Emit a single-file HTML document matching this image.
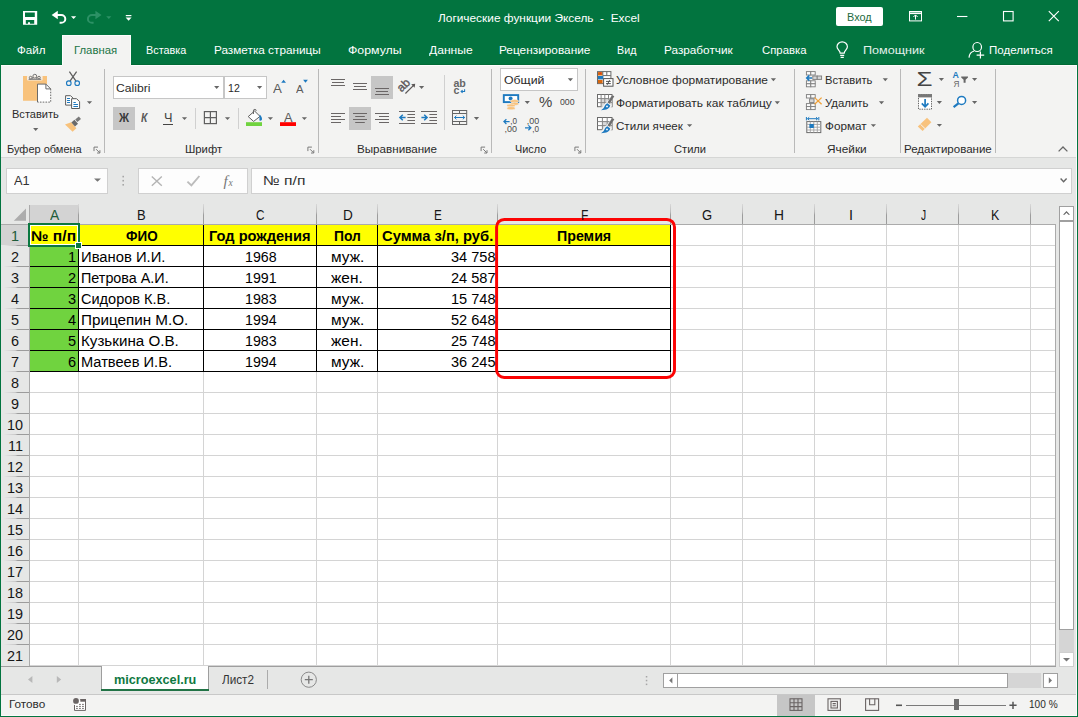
<!DOCTYPE html>
<html lang="ru"><head><meta charset="utf-8"><title>Логические функции Эксель - Excel</title>
<style>
html,body{margin:0;padding:0;}
body{width:1078px;height:717px;position:relative;overflow:hidden;background:#fff;font-family:"Liberation Sans", sans-serif;}
#app{position:absolute;left:0;top:0;width:1078px;height:717px;overflow:hidden;}
#app div{position:absolute;}
.t{position:absolute;white-space:pre;transform-origin:0 0;line-height:normal;font-family:"Liberation Sans", sans-serif;}
svg{position:absolute;left:0;top:0;}
</style></head><body>
<div id="app">
<div style="left:0px;top:0px;width:1078px;height:717px;background:#02743f;"></div>
<div style="left:1px;top:65px;width:1076px;height:93px;background:#f3f3f2;"></div>
<div style="left:1px;top:157px;width:1076px;height:1px;background:#d5d6d5;"></div>
<div style="left:1px;top:158px;width:1076px;height:47px;background:#e6e7e6;"></div>
<div style="left:1px;top:205px;width:1076px;height:461px;background:#e6e7e6;"></div>
<div style="left:1px;top:666px;width:1076px;height:28px;background:#e6e7e6;"></div>
<div style="left:1px;top:694px;width:1076px;height:1px;background:#c8c8c8;"></div>
<div style="left:1px;top:695px;width:1076px;height:21px;background:#f3f3f2;"></div>
<div style="left:1076px;top:65px;width:1px;height:651px;background:#fbfbfb;"></div>
<div style="left:1px;top:715px;width:1076px;height:1px;background:#fbfbfb;"></div>
<div style="left:836px;top:7px;width:47px;height:19px;background:#ffffff;border-radius:2px;"></div>
<div style="left:62px;top:35px;width:69px;height:30px;background:#f3f3f2;border:1px solid #fdfdfd;border-bottom:none;box-sizing:border-box;"></div>
<div style="left:1px;top:65px;width:61px;height:1px;background:#fdfdfd;"></div>
<div style="left:131px;top:65px;width:946px;height:1px;background:#fdfdfd;"></div>
<div style="left:1px;top:64px;width:61px;height:1px;background:#016a35;"></div>
<div style="left:131px;top:64px;width:946px;height:1px;background:#016a35;"></div>
<div style="left:104px;top:69px;width:1px;height:84px;background:#b9b9b9;"></div>
<div style="left:318px;top:69px;width:1px;height:84px;background:#b9b9b9;"></div>
<div style="left:491px;top:69px;width:1px;height:84px;background:#b9b9b9;"></div>
<div style="left:585px;top:69px;width:1px;height:84px;background:#b9b9b9;"></div>
<div style="left:794px;top:69px;width:1px;height:84px;background:#b9b9b9;"></div>
<div style="left:900px;top:69px;width:1px;height:84px;background:#b9b9b9;"></div>
<div style="left:995px;top:69px;width:1px;height:84px;background:#b9b9b9;"></div>
<div style="left:195px;top:108px;width:1px;height:21px;background:#d0d0d0;"></div>
<div style="left:238px;top:108px;width:1px;height:21px;background:#d0d0d0;"></div>
<div style="left:444px;top:75px;width:1px;height:55px;background:#d0d0d0;"></div>
<div style="left:113px;top:76px;width:111px;height:23px;background:#ffffff;border:1px solid #c6c6c6;box-sizing:border-box;"></div>
<div style="left:224px;top:76px;width:43px;height:23px;background:#ffffff;border:1px solid #c6c6c6;box-sizing:border-box;"></div>
<div style="left:113px;top:107px;width:22px;height:23px;background:#c6c6c6;"></div>
<div style="left:371px;top:76px;width:22px;height:23px;background:#c6c6c6;"></div>
<div style="left:349px;top:107px;width:22px;height:23px;background:#c6c6c6;"></div>
<div style="left:163px;top:124px;width:10px;height:1px;background:#444;"></div>
<div style="left:500px;top:68px;width:78px;height:23px;background:#ffffff;border:1px solid #c6c6c6;box-sizing:border-box;"></div>
<div style="left:6px;top:168px;width:102px;height:26px;background:#fdfdfd;border:1px solid #d0d0d0;box-sizing:border-box;"></div>
<div style="left:138px;top:168px;width:110px;height:26px;background:#fdfdfd;border:1px solid #d0d0d0;box-sizing:border-box;"></div>
<div style="left:251px;top:168px;width:821px;height:26px;background:#fdfdfd;border:1px solid #d0d0d0;box-sizing:border-box;"></div>
<div style="left:30px;top:225px;width:1026px;height:441px;background:#ffffff;"></div>
<div style="left:30px;top:205px;width:48px;height:19px;background:#d3d3d3;"></div>
<div style="left:1px;top:225px;width:28px;height:20px;background:#d3d3d3;"></div>
<div style="left:1px;top:224px;width:1055px;height:1px;background:#ababab;"></div>
<div style="left:29px;top:205px;width:1px;height:461px;background:#ababab;"></div>
<div style="left:1055px;top:224px;width:1px;height:442px;background:#ababab;"></div>
<div style="left:30px;top:665px;width:1025px;height:1px;background:#d4d4d4;"></div>
<div style="left:1px;top:666px;width:1055px;height:1px;background:#9e9e9e;"></div>
<div style="left:78px;top:204px;width:1px;height:20px;background:linear-gradient(180deg,#d8d8d8,#bcbcbc 40%,#9c9c9c 55%,#9c9c9c);"></div>
<div style="left:78px;top:225px;width:1px;height:440px;background:#d4d4d4;"></div>
<div style="left:203px;top:204px;width:1px;height:20px;background:linear-gradient(180deg,#d8d8d8,#bcbcbc 40%,#9c9c9c 55%,#9c9c9c);"></div>
<div style="left:203px;top:225px;width:1px;height:440px;background:#d4d4d4;"></div>
<div style="left:316px;top:204px;width:1px;height:20px;background:linear-gradient(180deg,#d8d8d8,#bcbcbc 40%,#9c9c9c 55%,#9c9c9c);"></div>
<div style="left:316px;top:225px;width:1px;height:440px;background:#d4d4d4;"></div>
<div style="left:377px;top:204px;width:1px;height:20px;background:linear-gradient(180deg,#d8d8d8,#bcbcbc 40%,#9c9c9c 55%,#9c9c9c);"></div>
<div style="left:377px;top:225px;width:1px;height:440px;background:#d4d4d4;"></div>
<div style="left:497px;top:204px;width:1px;height:20px;background:linear-gradient(180deg,#d8d8d8,#bcbcbc 40%,#9c9c9c 55%,#9c9c9c);"></div>
<div style="left:497px;top:225px;width:1px;height:440px;background:#d4d4d4;"></div>
<div style="left:670px;top:204px;width:1px;height:20px;background:linear-gradient(180deg,#d8d8d8,#bcbcbc 40%,#9c9c9c 55%,#9c9c9c);"></div>
<div style="left:670px;top:225px;width:1px;height:440px;background:#d4d4d4;"></div>
<div style="left:742px;top:204px;width:1px;height:20px;background:linear-gradient(180deg,#d8d8d8,#bcbcbc 40%,#9c9c9c 55%,#9c9c9c);"></div>
<div style="left:742px;top:225px;width:1px;height:440px;background:#d4d4d4;"></div>
<div style="left:814px;top:204px;width:1px;height:20px;background:linear-gradient(180deg,#d8d8d8,#bcbcbc 40%,#9c9c9c 55%,#9c9c9c);"></div>
<div style="left:814px;top:225px;width:1px;height:440px;background:#d4d4d4;"></div>
<div style="left:886px;top:204px;width:1px;height:20px;background:linear-gradient(180deg,#d8d8d8,#bcbcbc 40%,#9c9c9c 55%,#9c9c9c);"></div>
<div style="left:886px;top:225px;width:1px;height:440px;background:#d4d4d4;"></div>
<div style="left:958px;top:204px;width:1px;height:20px;background:linear-gradient(180deg,#d8d8d8,#bcbcbc 40%,#9c9c9c 55%,#9c9c9c);"></div>
<div style="left:958px;top:225px;width:1px;height:440px;background:#d4d4d4;"></div>
<div style="left:1030px;top:204px;width:1px;height:20px;background:linear-gradient(180deg,#d8d8d8,#bcbcbc 40%,#9c9c9c 55%,#9c9c9c);"></div>
<div style="left:1030px;top:225px;width:1px;height:440px;background:#d4d4d4;"></div>
<div style="left:30px;top:245px;width:1025px;height:1px;background:#d4d4d4;"></div>
<div style="left:4px;top:245px;width:25px;height:1px;background:linear-gradient(90deg,#e6e6e6,#c8c8c8 45%,#9c9c9c 55%,#9c9c9c);"></div>
<div style="left:30px;top:266px;width:1025px;height:1px;background:#d4d4d4;"></div>
<div style="left:4px;top:266px;width:25px;height:1px;background:linear-gradient(90deg,#e6e6e6,#c8c8c8 45%,#9c9c9c 55%,#9c9c9c);"></div>
<div style="left:30px;top:287px;width:1025px;height:1px;background:#d4d4d4;"></div>
<div style="left:4px;top:287px;width:25px;height:1px;background:linear-gradient(90deg,#e6e6e6,#c8c8c8 45%,#9c9c9c 55%,#9c9c9c);"></div>
<div style="left:30px;top:308px;width:1025px;height:1px;background:#d4d4d4;"></div>
<div style="left:4px;top:308px;width:25px;height:1px;background:linear-gradient(90deg,#e6e6e6,#c8c8c8 45%,#9c9c9c 55%,#9c9c9c);"></div>
<div style="left:30px;top:329px;width:1025px;height:1px;background:#d4d4d4;"></div>
<div style="left:4px;top:329px;width:25px;height:1px;background:linear-gradient(90deg,#e6e6e6,#c8c8c8 45%,#9c9c9c 55%,#9c9c9c);"></div>
<div style="left:30px;top:350px;width:1025px;height:1px;background:#d4d4d4;"></div>
<div style="left:4px;top:350px;width:25px;height:1px;background:linear-gradient(90deg,#e6e6e6,#c8c8c8 45%,#9c9c9c 55%,#9c9c9c);"></div>
<div style="left:30px;top:371px;width:1025px;height:1px;background:#d4d4d4;"></div>
<div style="left:4px;top:371px;width:25px;height:1px;background:linear-gradient(90deg,#e6e6e6,#c8c8c8 45%,#9c9c9c 55%,#9c9c9c);"></div>
<div style="left:30px;top:392px;width:1025px;height:1px;background:#d4d4d4;"></div>
<div style="left:4px;top:392px;width:25px;height:1px;background:linear-gradient(90deg,#e6e6e6,#c8c8c8 45%,#9c9c9c 55%,#9c9c9c);"></div>
<div style="left:30px;top:413px;width:1025px;height:1px;background:#d4d4d4;"></div>
<div style="left:4px;top:413px;width:25px;height:1px;background:linear-gradient(90deg,#e6e6e6,#c8c8c8 45%,#9c9c9c 55%,#9c9c9c);"></div>
<div style="left:30px;top:434px;width:1025px;height:1px;background:#d4d4d4;"></div>
<div style="left:4px;top:434px;width:25px;height:1px;background:linear-gradient(90deg,#e6e6e6,#c8c8c8 45%,#9c9c9c 55%,#9c9c9c);"></div>
<div style="left:30px;top:455px;width:1025px;height:1px;background:#d4d4d4;"></div>
<div style="left:4px;top:455px;width:25px;height:1px;background:linear-gradient(90deg,#e6e6e6,#c8c8c8 45%,#9c9c9c 55%,#9c9c9c);"></div>
<div style="left:30px;top:476px;width:1025px;height:1px;background:#d4d4d4;"></div>
<div style="left:4px;top:476px;width:25px;height:1px;background:linear-gradient(90deg,#e6e6e6,#c8c8c8 45%,#9c9c9c 55%,#9c9c9c);"></div>
<div style="left:30px;top:497px;width:1025px;height:1px;background:#d4d4d4;"></div>
<div style="left:4px;top:497px;width:25px;height:1px;background:linear-gradient(90deg,#e6e6e6,#c8c8c8 45%,#9c9c9c 55%,#9c9c9c);"></div>
<div style="left:30px;top:518px;width:1025px;height:1px;background:#d4d4d4;"></div>
<div style="left:4px;top:518px;width:25px;height:1px;background:linear-gradient(90deg,#e6e6e6,#c8c8c8 45%,#9c9c9c 55%,#9c9c9c);"></div>
<div style="left:30px;top:539px;width:1025px;height:1px;background:#d4d4d4;"></div>
<div style="left:4px;top:539px;width:25px;height:1px;background:linear-gradient(90deg,#e6e6e6,#c8c8c8 45%,#9c9c9c 55%,#9c9c9c);"></div>
<div style="left:30px;top:560px;width:1025px;height:1px;background:#d4d4d4;"></div>
<div style="left:4px;top:560px;width:25px;height:1px;background:linear-gradient(90deg,#e6e6e6,#c8c8c8 45%,#9c9c9c 55%,#9c9c9c);"></div>
<div style="left:30px;top:581px;width:1025px;height:1px;background:#d4d4d4;"></div>
<div style="left:4px;top:581px;width:25px;height:1px;background:linear-gradient(90deg,#e6e6e6,#c8c8c8 45%,#9c9c9c 55%,#9c9c9c);"></div>
<div style="left:30px;top:602px;width:1025px;height:1px;background:#d4d4d4;"></div>
<div style="left:4px;top:602px;width:25px;height:1px;background:linear-gradient(90deg,#e6e6e6,#c8c8c8 45%,#9c9c9c 55%,#9c9c9c);"></div>
<div style="left:30px;top:623px;width:1025px;height:1px;background:#d4d4d4;"></div>
<div style="left:4px;top:623px;width:25px;height:1px;background:linear-gradient(90deg,#e6e6e6,#c8c8c8 45%,#9c9c9c 55%,#9c9c9c);"></div>
<div style="left:30px;top:644px;width:1025px;height:1px;background:#d4d4d4;"></div>
<div style="left:4px;top:644px;width:25px;height:1px;background:linear-gradient(90deg,#e6e6e6,#c8c8c8 45%,#9c9c9c 55%,#9c9c9c);"></div>
<div style="left:30px;top:225px;width:640px;height:20px;background:#ffff00;"></div>
<div style="left:30px;top:246px;width:48px;height:125px;background:#70d33f;"></div>
<div style="left:30px;top:245px;width:641px;height:1px;background:#000000;"></div>
<div style="left:30px;top:266px;width:641px;height:1px;background:#000000;"></div>
<div style="left:30px;top:287px;width:641px;height:1px;background:#000000;"></div>
<div style="left:30px;top:308px;width:641px;height:1px;background:#000000;"></div>
<div style="left:30px;top:329px;width:641px;height:1px;background:#000000;"></div>
<div style="left:30px;top:350px;width:641px;height:1px;background:#000000;"></div>
<div style="left:30px;top:371px;width:641px;height:1px;background:#000000;"></div>
<div style="left:78px;top:225px;width:1px;height:147px;background:#000000;"></div>
<div style="left:203px;top:225px;width:1px;height:147px;background:#000000;"></div>
<div style="left:316px;top:225px;width:1px;height:147px;background:#000000;"></div>
<div style="left:377px;top:225px;width:1px;height:147px;background:#000000;"></div>
<div style="left:497px;top:225px;width:1px;height:147px;background:#000000;"></div>
<div style="left:670px;top:225px;width:1px;height:147px;background:#000000;"></div>
<div style="left:30px;top:225px;width:48px;height:20px;border:1px solid #ffffff;box-sizing:border-box;"></div>
<div style="left:28px;top:223px;width:52px;height:24px;border:2px solid #0b7840;box-sizing:border-box;"></div>
<div style="left:75px;top:242px;width:7px;height:7px;background:#0b7840;border:1px solid #ffffff;box-sizing:border-box;"></div>
<div style="left:101px;top:666px;width:108px;height:23px;background:#ffffff;border-left:1px solid #9e9e9e;border-right:1px solid #9e9e9e;box-sizing:border-box;"></div>
<div style="left:101px;top:689px;width:108px;height:2px;background:#217346;"></div>
<div style="left:267px;top:670px;width:1px;height:19px;background:#ababab;"></div>
<div style="left:1059px;top:206px;width:15px;height:15px;background:#ffffff;border:1px solid #a0a0a0;box-sizing:border-box;"></div>
<div style="left:1059px;top:221px;width:15px;height:409px;background:#ffffff;border:1px solid #a0a0a0;box-sizing:border-box;"></div>
<div style="left:1059px;top:630px;width:15px;height:22px;background:#d5d5d5;"></div>
<div style="left:1059px;top:652px;width:15px;height:15px;background:#ffffff;border:1px solid #cfcfcf;box-sizing:border-box;"></div>
<div style="left:663px;top:673px;width:15px;height:15px;background:#ffffff;border:1px solid #a0a0a0;box-sizing:border-box;"></div>
<div style="left:677px;top:673px;width:331px;height:15px;background:#ffffff;border:1px solid #a0a0a0;box-sizing:border-box;"></div>
<div style="left:1008px;top:673px;width:33px;height:15px;background:#d5d5d5;"></div>
<div style="left:1043px;top:673px;width:15px;height:15px;background:#ffffff;border:1px solid #a0a0a0;box-sizing:border-box;"></div>
<div style="left:777px;top:695px;width:38px;height:21px;background:#c6c6c6;"></div>
<div style="left:906px;top:705px;width:100px;height:1px;background:#7a7a7a;"></div>
<div style="left:954px;top:699px;width:5px;height:11px;background:#6e6e6e;"></div>
<svg width="1078" height="717" viewBox="0 0 1078 717">
<rect x="496.6" y="219.4" width="177.9" height="158.1" rx="7.6" ry="7.6" fill="none" stroke="#fc0404" stroke-width="2.95"/>
<path fill-rule="evenodd" fill="#ffffff" d="M23 11h14.2v13.8H23zM25 12.6v4.4h9.8v-4.4zM25.8 20v3.8h2.2v-1.6h2v1.6h4.2V20z"/>
<path d="M51.6 15.1l6.2-4.3v3.2H61.2a5.1 4.9 0 0 1 0 9.8h-1.6v-2h1.6a3.1 2.9 0 0 0 0-5.8H57.8v3.3z" fill="#ffffff"/>
<path d="M71 16.2h5.2l-2.6 2.8z" fill="#ffffff"/>
<path d="M101.6 15.1l-6.2-4.3v3.2H92a5.1 4.9 0 0 0 0 9.8h1.6v-2H92a3.1 2.9 0 0 1 0-5.8h3.4v3.3z" fill="#2c9165"/>
<path d="M106.2 16.2h5.2l-2.6 2.8z" fill="#2c9165"/>
<rect x="125.8" y="15" width="5.6" height="1.2" fill="#ffffff"/><path d="M125.6 17.6h6l-3 3.2z" fill="#ffffff"/>
<g fill="none" stroke="#ffffff" stroke-width="1"><rect x="909.5" y="11.5" width="12" height="9.4"/><path d="M909.5 13.3h12" stroke-width="1.6"/><path d="M915.5 19.6v-4.6M913.4 17l2.1-2.1 2.1 2.1"/></g>
<path d="M957 16.5h10.4" stroke="#ffffff" stroke-width="1.1"/>
<rect x="1003.5" y="11.5" width="9.6" height="9.4" fill="none" stroke="#ffffff" stroke-width="1.1"/>
<path d="M1048.8 11.2l10 10M1058.8 11.2l-10 10" stroke="#ffffff" stroke-width="1.15"/>
<g fill="none" stroke="#ffffff" stroke-width="1.2"><path d="M840.2 53.2c0-2.6-3.2-3.6-3.2-6.4a5.2 5 0 0 1 10.4 0c0 2.8-3.2 3.8-3.2 6.4z"/><path d="M840.2 55.3h4M840.6 57.3h3.2"/></g>
<g fill="none" stroke="#ffffff" stroke-width="1.2"><ellipse cx="977.2" cy="47" rx="4.3" ry="4.5"/><path d="M969 57.6c.4-4 2.6-6 5.2-6.6M976.6 55.2h7.6M980.4 51.6v7"/></g>
<path d="M23 76h24v8H37v16.8H23z" fill="#f8c27c"/>
<rect x="27" y="75.6" width="15.6" height="4.8" rx="1" fill="#f6efe6"/>
<g fill="none" stroke="#747474" stroke-width="1"><path d="M28.6 79.3h12.6"/><circle cx="30.6" cy="77.6" r="1.3"/><circle cx="34.8" cy="76.2" r="1.9"/><circle cx="39" cy="77.6" r="1.3"/><path d="M32.8 79v-2M36.8 79v-2"/></g>
<path d="M37.5 84.1h8.4l4.8 4.8v13.2H37.5z" fill="#ffffff"/>
<path d="M37.5 102.1V84.1h8.4l4.8 4.8M45.9 84.1v4.8h4.8" fill="none" stroke="#6a6a6a" stroke-width="1"/>
<path d="M50.7 88.9v13.2H37.5" fill="none" stroke="#6a6a6a" stroke-width="1" stroke-dasharray="1.6 1.2"/>
<path d="M33.1 128h5.2l-2.6 2.9z" fill="#666666"/>
<g fill="none" stroke="#5d5d5d" stroke-width="1.25"><path d="M69.4 71.6l6.6 9.6M76.6 71.6l-6.6 9.6"/></g>
<g fill="none" stroke="#1e7ac0" stroke-width="1.1"><circle cx="68.8" cy="83.2" r="2.3"/><circle cx="77.2" cy="83.2" r="2.3"/></g>
<g fill="#ffffff" stroke="#5d5d5d" stroke-width="1"><path d="M65.6 95.7h5l2.6 2.6v6.8h-7.6z"/><path d="M71.6 98.7h5l3 3v6.8h-8z"/></g>
<g stroke="#1e7ac0" stroke-width="1"><path d="M67 98.5h3M67 100.5h3M67 102.5h3M73.4 102.5h2.4M73.4 104.5h4.6M73.4 106.5h4.6"/></g>
<path d="M86.9 101.2h5.2l-2.6 2.9z" fill="#666666"/>
<path d="M65 124.4l6.2-2.2 5.2 6-3.8 3.6z" fill="#f8c27c"/>
<path d="M71.4 122.4l3-2.6 3.6 4-3 2.8z" fill="#6a6a6a"/><path d="M75.2 119.4l3.6-3 2.2 2.6-3.6 3z" fill="#7a7a7a"/>
<g fill="none" stroke="#7a7a7a" stroke-width="1"><path d="M94.0 151.1v-4h4"/><path d="M96.1 149.2l3.6 3.6M99.9 150.2v2.8h-2.8"/></g>
<g fill="none" stroke="#7a7a7a" stroke-width="1"><path d="M307.9 151.1v-4h4"/><path d="M310.0 149.2l3.6 3.6M313.79999999999995 150.2v2.8h-2.8"/></g>
<g fill="none" stroke="#7a7a7a" stroke-width="1"><path d="M481.1 151.1v-4h4"/><path d="M483.20000000000005 149.2l3.6 3.6M487.0 150.2v2.8h-2.8"/></g>
<g fill="none" stroke="#7a7a7a" stroke-width="1"><path d="M574.9 151.1v-4h4"/><path d="M577.0 149.2l3.6 3.6M580.8 150.2v2.8h-2.8"/></g>
<path d="M214.1 86h5.2l-2.6 2.9z" fill="#666666"/>
<path d="M257 86h5.2l-2.6 2.9z" fill="#666666"/>
<path d="M281.2 82.8h4.8l-2.4-3z" fill="#1e7ac0"/><path d="M303.1 79.8h4.8l-2.4 3z" fill="#1e7ac0"/>
<path d="M181.9 117.2h5.2l-2.6 2.9z" fill="#666666"/>
<g fill="none" stroke="#5f5f5f" stroke-width="1.2"><rect x="204.4" y="111.6" width="12" height="12"/><path d="M210.4 111.6v12M204.4 117.6h12"/></g>
<path d="M224.9 117.2h5.2l-2.6 2.9z" fill="#666666"/>
<rect x="246" y="122.2" width="16" height="3.8" fill="#70d33f"/>
<path d="M248.2 116.6l6.4-5.6 5.4 5.4-6.4 5z" fill="#ffffff" stroke="#5f5f5f" stroke-width="1"/>
<path d="M253.4 114v-3.2a1.4 1.4 0 0 1 2.8 0" fill="none" stroke="#5f5f5f" stroke-width="1"/>
<path d="M259.6 114.6c1.6 1.4 2.4 3 2.4 4.4a1.5 1.6 0 0 1 -2.6 1.2z" fill="#1e7ac0"/>
<path d="M267.8 117.2h5.2l-2.6 2.9z" fill="#666666"/>
<rect x="280" y="122.2" width="16" height="3.8" fill="#ff0000"/>
<path d="M301.8 117.2h5.2l-2.6 2.9z" fill="#666666"/>
<path d="M331 79.5H345M332 82.5H344M331 85.5H345" stroke="#6a6666" stroke-width="1.05" fill="none"/>
<path d="M353 83.5H367M354 86.5H366M353 89.5H367" stroke="#6a6666" stroke-width="1.05" fill="none"/>
<path d="M375 88.5H389M376 91.5H388M375 94.5H389" stroke="#6a6666" stroke-width="1.05" fill="none"/>
<text x="0" y="0" transform="translate(401.6 92.6) rotate(-45)" font-family="Liberation Sans, sans-serif" font-size="11.8" fill="#5a5656" stroke="#5a5656" stroke-width=".35">ab</text>
<path d="M405.4 93.5l8.4-8.4" fill="none" stroke="#5a5656" stroke-width="1.15"/><path d="M415.2 83.7l-.6 4-3.4-3.4z" fill="#5a5656"/>
<path d="M419 86h5.2l-2.6 2.9z" fill="#666666"/>
<path d="M331 113.5H345M331 116.5H341M331 119.5H345M331 122.5H341" stroke="#6a6666" stroke-width="1.05" fill="none"/>
<path d="M353 113.5H367M355.2 116.5H364.8M353 119.5H367M355.2 122.5H364.8" stroke="#6a6666" stroke-width="1.05" fill="none"/>
<path d="M375 113.5H389M379 116.5H389M375 119.5H389M379 122.5H389" stroke="#6a6666" stroke-width="1.05" fill="none"/>
<path d="M399 111.5H415M407.4 114.5H415M407.4 117.5H415M407.4 120.5H415M399 123.5H415" stroke="#6a6666" stroke-width="1.05" fill="none"/>
<path d="M421 111.5H437M429.4 114.5H437M429.4 117.5H437M429.4 120.5H437M421 123.5H437" stroke="#6a6666" stroke-width="1.05" fill="none"/>
<path d="M405.6 117.5h-5.4M402.8 114.7l-2.9 2.8 2.9 2.8" fill="none" stroke="#1e7ac0" stroke-width="1.5"/>
<path d="M421.4 117.5h5.4M424.2 114.7l2.9 2.8-2.9 2.8" fill="none" stroke="#1e7ac0" stroke-width="1.5"/>
<text x="453.4" y="86.6" font-family="Liberation Sans, sans-serif" font-size="10" font-weight="700" fill="#666" textLength="12.4" lengthAdjust="spacingAndGlyphs">ab</text>
<text x="453.6" y="93.6" font-family="Liberation Sans, sans-serif" font-size="10.6" font-weight="700" fill="#666">c</text>
<path d="M464.6 89.2v2.3h-3.4M462.6 90.1l-1.5 1.4 1.5 1.4" fill="none" stroke="#1e7ac0" stroke-width="1.05"/>
<g fill="none" stroke="#666" stroke-width="1"><rect x="452.5" y="110.5" width="14.2" height="14"/><path d="M452.5 113.5h14.2M452.5 121.5h14.2M459.5 110.5v3M459.5 121.5v3"/></g>
<path d="M454.6 117.5h10M456.4 115.7l-1.9 1.8 1.9 1.8M462.8 115.7l1.9 1.8-1.9 1.8" fill="none" stroke="#1e7ac0" stroke-width="1"/>
<path d="M473.9 117h5.2l-2.6 2.9z" fill="#666666"/>
<path d="M567.8 78.3h5.2l-2.6 2.9z" fill="#666666"/>
<rect x="503.8" y="95.1" width="14.4" height="7" fill="#ffffff" stroke="#1e7ac0" stroke-width="1.9"/><circle cx="510.6" cy="98.6" r="2" fill="#1e7ac0"/>
<g fill="#f8c27c" stroke="#f3f3f2" stroke-width=".5"><ellipse cx="514.6" cy="101.2" rx="4.2" ry="1.6"/><ellipse cx="514.6" cy="103.8" rx="4.2" ry="1.6"/><ellipse cx="511" cy="105.6" rx="4.2" ry="1.6"/><ellipse cx="511" cy="108.2" rx="4.2" ry="1.6"/></g>
<path d="M524.7 101h5.2l-2.6 2.9z" fill="#666666"/>
<text x="510.2" y="123.8" font-family="Liberation Sans, sans-serif" font-size="8.2" fill="#4a4a4a" textLength="6.8" lengthAdjust="spacingAndGlyphs">,0</text>
<text x="504.6" y="131.5" font-family="Liberation Sans, sans-serif" font-size="8.2" fill="#4a4a4a" textLength="12.4" lengthAdjust="spacingAndGlyphs">,00</text>
<text x="526.8" y="123.8" font-family="Liberation Sans, sans-serif" font-size="8.2" fill="#4a4a4a" textLength="12.4" lengthAdjust="spacingAndGlyphs">,00</text>
<text x="532.2" y="131.5" font-family="Liberation Sans, sans-serif" font-size="8.2" fill="#4a4a4a" textLength="6.8" lengthAdjust="spacingAndGlyphs">,0</text>
<path d="M509.6 121.6h-5.6M506.4 119.2l-2.5 2.4 2.5 2.4" fill="none" stroke="#1e7ac0" stroke-width="1.2"/>
<path d="M525 127.8h5.8M528.4 125.4l2.5 2.4-2.5 2.4" fill="none" stroke="#1e7ac0" stroke-width="1.2"/>
<rect x="597.5" y="71.6" width="13.4" height="12" fill="#ffffff" stroke="#6a6a6a" stroke-width="1"/>
<rect x="598" y="72.1" width="4.6" height="3.4" fill="#d8670e"/><rect x="598" y="76" width="5.4" height="3.4" fill="#1e7ac0"/><rect x="598" y="79.9" width="4.6" height="3.4" fill="#d8670e"/>
<rect x="599.6" y="72.6" width="1.6" height="1.2" fill="#e8261a"/>
<path d="M602.8 71.6v4M606.8 71.6v4M602.8 75.6h8" stroke="#6a6a6a" stroke-width="1" fill="none"/>
<rect x="603.6" y="78.6" width="9.4" height="7.6" fill="#ffffff" stroke="#555" stroke-width="1"/>
<path d="M606 81.4h4.8M606 83.6h4.8M609.6 80.2l-2.4 4.6" stroke="#444" stroke-width=".9" fill="none"/>
<rect x="597.5" y="94.5" width="14.6" height="12.2" fill="#ffffff" stroke="#6a6a6a" stroke-width="1"/>
<rect x="601.1" y="98.6" width="10.9" height="8.1" fill="#d9d9d9"/>
<path d="M601.1 94.5v12.2M604.8 94.5v12.2M608.5 94.5v12.2M597.5 98.6h14.6M597.5 102.6h14.6" stroke="#858585" stroke-width="1" fill="none"/>
<path d="M613.6 95.2l-5 8.4l2 2.2c-1 3.4-4.6 4.6-10.6 4.8c3-1.8 3.6-3.4 4.4-5c.6-1.4 1.4-2.2 2.8-2.6z" fill="#f3f3f2" stroke="#f3f3f2" stroke-width="2"/>
<path d="M613.2 95.6l-4.6 7.6" stroke="#6e6e6e" stroke-width="2.6"/>
<path d="M607.4 103.2l2.8 2.4c-.6 3-3.6 4.6-9.2 4.6c2.6-1.6 3.2-3 3.8-4.4c.6-1.4 1.4-2.2 2.6-2.6z" fill="#1e7ac0"/>
<circle cx="607" cy="106.4" r=".9" fill="#ffffff"/>
<rect x="597.5" y="117.5" width="14.6" height="12.2" fill="#ffffff" stroke="#6a6a6a" stroke-width="1"/>
<rect x="602.4" y="121.6" width="9.7" height="8.1" fill="#d9d9d9"/>
<path d="M602.4 117.5v12.2M607.2 117.5v12.2M597.5 121.6h14.6M597.5 125.6h14.6" stroke="#858585" stroke-width="1" fill="none"/>
<path d="M613.6 118.2l-5 8.4l2 2.2c-1 3.4-4.6 4.6-10.6 4.8c3-1.8 3.6-3.4 4.4-5c.6-1.4 1.4-2.2 2.8-2.6z" fill="#f3f3f2" stroke="#f3f3f2" stroke-width="2"/>
<path d="M613.2 118.6l-4.6 7.6" stroke="#6e6e6e" stroke-width="2.6"/>
<path d="M607.4 126.2l2.8 2.4c-.6 3-3.6 4.6-9.2 4.6c2.6-1.6 3.2-3 3.8-4.4c.6-1.4 1.4-2.2 2.6-2.6z" fill="#1e7ac0"/>
<circle cx="607" cy="129.4" r=".9" fill="#ffffff"/>
<path d="M770.8 78.3h5.2l-2.6 2.9z" fill="#666666"/>
<path d="M774.7 101.3h5.2l-2.6 2.9z" fill="#666666"/>
<path d="M687 124.2h5.2l-2.6 2.9z" fill="#666666"/>
<rect x="806.4" y="71.6" width="4.4" height="3.4" fill="#fbfbfb" stroke="#7c7c7c" stroke-width=".9"/>
<rect x="810.8" y="71.6" width="4.4" height="3.4" fill="#fbfbfb" stroke="#7c7c7c" stroke-width=".9"/>
<rect x="812.8" y="76" width="4.4" height="3.4" fill="#d6d6d6" stroke="#7c7c7c" stroke-width=".9"/>
<rect x="817.2" y="76" width="4.4" height="3.4" fill="#d6d6d6" stroke="#7c7c7c" stroke-width=".9"/>
<rect x="806.4" y="80.8" width="4.4" height="3" fill="#fbfbfb" stroke="#7c7c7c" stroke-width=".9"/>
<rect x="810.8" y="80.8" width="4.4" height="3" fill="#fbfbfb" stroke="#7c7c7c" stroke-width=".9"/>
<rect x="806.4" y="83.8" width="4.4" height="3" fill="#fbfbfb" stroke="#7c7c7c" stroke-width=".9"/>
<rect x="810.8" y="83.8" width="4.4" height="3" fill="#fbfbfb" stroke="#7c7c7c" stroke-width=".9"/>
<path d="M812 78h-5M809.4 75.4l-2.7 2.6 2.7 2.6" fill="none" stroke="#1e7ac0" stroke-width="1.5"/>
<rect x="806.4" y="94.6" width="4.4" height="3.4" fill="#fbfbfb" stroke="#7c7c7c" stroke-width=".9"/>
<rect x="810.8" y="94.6" width="4.4" height="3.4" fill="#fbfbfb" stroke="#7c7c7c" stroke-width=".9"/>
<rect x="809.6" y="98.8" width="4.4" height="3.8" fill="#d6d6d6" stroke="#7c7c7c" stroke-width=".9"/>
<rect x="806.4" y="103.6" width="4.4" height="3" fill="#fbfbfb" stroke="#7c7c7c" stroke-width=".9"/>
<rect x="810.8" y="103.6" width="4.4" height="3" fill="#fbfbfb" stroke="#7c7c7c" stroke-width=".9"/>
<rect x="806.4" y="106.6" width="4.4" height="3" fill="#fbfbfb" stroke="#7c7c7c" stroke-width=".9"/>
<rect x="810.8" y="106.6" width="4.4" height="3" fill="#fbfbfb" stroke="#7c7c7c" stroke-width=".9"/>
<path d="M814.6 97.6l7 6.6M821.6 97.6l-7 6.6" stroke="#f0a23a" stroke-width="1.3" fill="none"/>
<path d="M806.4 117v3.4M818.8 117v3.4M807.4 118.7h10.4M809.2 117.2l-1.6 1.5 1.6 1.5M816 117.2l1.6 1.5-1.6 1.5" stroke="#1e7ac0" stroke-width="1" fill="none"/>
<rect x="806.8" y="121.6" width="14" height="11" fill="#ffffff" stroke="#6a6a6a" stroke-width="1"/>
<path d="M810.3 121.6v11M813.8 121.6v11M817.3 121.6v11M806.8 124.4h14M806.8 127.2h14M806.8 130h14" stroke="#a0a0a0" stroke-width=".9" fill="none"/>
<rect x="809.4" y="124" width="4.4" height="4" fill="#1e7ac0"/>
<path d="M882.7 78.3h5.2l-2.6 2.9z" fill="#666666"/>
<path d="M878.9 101.3h5.2l-2.6 2.9z" fill="#666666"/>
<path d="M870.8 124.2h5.2l-2.6 2.9z" fill="#666666"/>
<text x="916.4" y="86" font-family="Liberation Sans, sans-serif" font-size="20.6" fill="#444" textLength="16" lengthAdjust="spacingAndGlyphs">Σ</text>
<path d="M938.8 78h5.2l-2.6 2.9z" fill="#666666"/>
<text x="952.6" y="77.7" font-family="Liberation Sans, sans-serif" font-size="8.8" font-weight="700" fill="#1e7ac0">A</text>
<text x="953.4" y="86.5" font-family="Liberation Sans, sans-serif" font-size="8.2" fill="#666">Я</text>
<path d="M961.2 76.4h6.8v1l-2.4 2.4v3h-2v-3l-2.4-2.4z" fill="#666"/>
<path d="M972 78h5.2l-2.6 2.9z" fill="#666666"/>
<rect x="918.5" y="94.6" width="13" height="14.6" fill="#ffffff" stroke="#666" stroke-width="1" stroke-dasharray="1.4 1"/>
<rect x="918" y="94.1" width="14" height="3.3" fill="#777"/>
<path d="M925.1 99v7.4M921.8 103.4l3.3 3.4 3.3-3.4" fill="none" stroke="#1e7ac0" stroke-width="1.7"/>
<path d="M936.8 101h5.2l-2.6 2.9z" fill="#666666"/>
<circle cx="961.6" cy="100.4" r="4" fill="#ffffff" stroke="#1e7ac0" stroke-width="1.5"/><path d="M958.4 103.4l-4.8 3.8" stroke="#1e7ac0" stroke-width="2.2"/>
<path d="M972 101h5.2l-2.6 2.9z" fill="#666666"/>
<path d="M917.8 126.4l9.2-8.6 4.4 4.4-8.8 8.8z" fill="#f8c27c"/><path d="M920.4 124.2l4.6 4.4" stroke="#f3f3f2" stroke-width="1"/>
<path d="M936.8 123.9h5.2l-2.6 2.9z" fill="#666666"/>
<path d="M1058.6 151.4l4.4-4.4 4.4 4.4" fill="none" stroke="#666" stroke-width="1.3"/>
<path d="M94 178.4h7l-3.5 3.4z" fill="#777777"/>
<g fill="#a6a6a6"><rect x="122.4" y="175.8" width="1.6" height="1.6"/><rect x="122.4" y="179.9" width="1.6" height="1.6"/><rect x="122.4" y="184" width="1.6" height="1.6"/></g>
<path d="M151.8 176.4l10 9.4M161.8 176.4l-10 9.4" stroke="#b4b4b4" stroke-width="1.4" fill="none"/>
<path d="M187.4 181.6l4 3.8 8-9.4" stroke="#bcbcbc" stroke-width="1.9" fill="none"/>
<text x="223.4" y="185.6" font-family="Liberation Serif, serif" font-style="italic" font-size="15" fill="#777">f</text>
<text x="228.6" y="185.6" font-family="Liberation Serif, serif" font-style="italic" font-size="9.5" fill="#777">x</text>
<path d="M1060.6 178.6l3 3.2 3-3.2" stroke="#666" stroke-width="1.4" fill="none"/>
<path d="M13.8 220.8h12.2v-12.2z" fill="#adadad"/>
<path d="M32.4 676v7l-4.4-3.5z" fill="#b8b8b8"/><path d="M56.8 676v7l4.4-3.5z" fill="#b8b8b8"/>
<circle cx="308.8" cy="679.7" r="7.6" fill="none" stroke="#8a8a8a" stroke-width="1"/><path d="M304.8 679.7h8M308.8 675.7v8" stroke="#777" stroke-width="1.3"/>
<g fill="#a6a6a6"><rect x="645.8" y="676" width="1.5" height="1.5"/><rect x="645.8" y="679.8" width="1.5" height="1.5"/><rect x="645.8" y="683.6" width="1.5" height="1.5"/></g>
<path d="M1063 214.8l3.5-3.7 3.5 3.7h-1.6l-1.9-2-1.9 2z" fill="#666"/>
<path d="M1063 658h7l-3.5 3.6z" fill="#777"/>
<path d="M672.4 677.2v6.4l-3.2-3.2z" fill="#777"/>
<path d="M1048.8 677.2v6.4l3.2-3.2z" fill="#777"/>
<path d="M74.5 705v5.4h11v-10.9h-5" fill="#ffffff" stroke="#6a6464" stroke-width="1"/>
<rect x="80.3" y="699" width="5.7" height="2.7" fill="#6a6464"/>
<circle cx="76" cy="700.9" r="2.9" fill="#6a6464"/>
<path d="M79 704.4h1.9M82 704.4h1.9M76 706.4h1.9M79 706.4h1.9M82 706.4h1.9M76 708.4h1.9M79 708.4h1.9M82 708.4h1.9" stroke="#6a6464" stroke-width=".9"/>
<g fill="none" stroke="#6a6464" stroke-width="1.1"><rect x="790" y="698.8" width="12" height="11.6"/><path d="M794 698.8v11.6M798 698.8v11.6M790 702.7h12M790 706.6h12"/></g>
<g fill="none" stroke="#6a6464" stroke-width="1.1"><rect x="828" y="698.8" width="12.4" height="11.6"/><rect x="831" y="701.4" width="6.4" height="6.6"/><path d="M832.6 703.6h3.2M832.6 705.8h3.2"/></g>
<g fill="none" stroke="#6a6464" stroke-width="1.1"><rect x="865.6" y="698.8" width="13" height="11.6"/><path d="M869.6 698.8v6h5.2v-6"/></g>
<path d="M896 705.3h6" stroke="#555" stroke-width="1.6"/><path d="M1009.4 705.3h7.2M1013 701.7v7.2" stroke="#555" stroke-width="1.5"/>
</svg>
<span class="t" style="left:437.50px;top:11.00px;font-size:11.6px;color:#ffffff;transform:scaleX(1.0235);">Логические функции Эксель  -  Excel</span>
<span class="t" style="left:847.40px;top:10.00px;font-size:11.6px;color:#1d6b41;transform:scaleX(0.9372);">Вход</span>
<span class="t" style="left:16.80px;top:43.00px;font-size:11.6px;color:#ffffff;transform:scaleX(1.0022);">Файл</span>
<span class="t" style="left:145.80px;top:43.00px;font-size:11.6px;color:#ffffff;transform:scaleX(0.9348);">Вставка</span>
<span class="t" style="left:214.30px;top:43.00px;font-size:11.6px;color:#ffffff;transform:scaleX(1.0149);">Разметка страницы</span>
<span class="t" style="left:348.30px;top:43.00px;font-size:11.6px;color:#ffffff;transform:scaleX(1.0635);">Формулы</span>
<span class="t" style="left:428.80px;top:43.00px;font-size:11.6px;color:#ffffff;transform:scaleX(1.0425);">Данные</span>
<span class="t" style="left:499.40px;top:43.00px;font-size:11.6px;color:#ffffff;transform:scaleX(1.0205);">Рецензирование</span>
<span class="t" style="left:617.00px;top:43.00px;font-size:11.6px;color:#ffffff;transform:scaleX(0.9241);">Вид</span>
<span class="t" style="left:664.30px;top:43.00px;font-size:11.6px;color:#ffffff;transform:scaleX(1.0155);">Разработчик</span>
<span class="t" style="left:761.50px;top:43.00px;font-size:11.6px;color:#ffffff;transform:scaleX(0.9776);">Справка</span>
<span class="t" style="left:988.80px;top:43.00px;font-size:11.6px;color:#ffffff;transform:scaleX(0.9946);">Поделиться</span>
<span class="t" style="left:862.60px;top:43.00px;font-size:11.6px;color:#e3f1ea;transform:scaleX(1.0865);">Помощник</span>
<span class="t" style="left:74.40px;top:43.00px;font-size:11.6px;color:#217346;transform:scaleX(0.9761);">Главная</span>
<span class="t" style="left:7.30px;top:141.60px;font-size:11.6px;color:#2b2b2b;transform:scaleX(0.9479);">Буфер обмена</span>
<span class="t" style="left:184.80px;top:141.60px;font-size:11.6px;color:#2b2b2b;transform:scaleX(0.9734);">Шрифт</span>
<span class="t" style="left:357.40px;top:141.60px;font-size:11.6px;color:#2b2b2b;transform:scaleX(1.0031);">Выравнивание</span>
<span class="t" style="left:514.50px;top:141.60px;font-size:11.6px;color:#2b2b2b;transform:scaleX(0.9363);">Число</span>
<span class="t" style="left:674.40px;top:141.60px;font-size:11.6px;color:#2b2b2b;transform:scaleX(0.9598);">Стили</span>
<span class="t" style="left:827.40px;top:141.60px;font-size:11.6px;color:#2b2b2b;transform:scaleX(1.0206);">Ячейки</span>
<span class="t" style="left:904.40px;top:141.60px;font-size:11.6px;color:#2b2b2b;transform:scaleX(0.9935);">Редактирование</span>
<span class="t" style="left:11.50px;top:107.00px;font-size:11.6px;color:#2b2b2b;transform:scaleX(0.9531);">Вставить</span>
<span class="t" style="left:116.20px;top:81.00px;font-size:11.6px;color:#2b2b2b;transform:scaleX(1.0471);">Calibri</span>
<span class="t" style="left:227.80px;top:81.00px;font-size:11.6px;color:#2b2b2b;transform:scaleX(0.9158);">12</span>
<span class="t" style="left:119.22px;top:111.00px;font-size:12px;color:#3a3a3a;transform:scaleX(0.9250);font-weight:700;">Ж</span>
<span class="t" style="left:141.20px;top:111.00px;font-size:12px;color:#5a5a5a;transform:scaleX(0.8667);font-weight:700;font-style:italic;">К</span>
<span class="t" style="left:163.70px;top:111.00px;font-size:12px;color:#444;transform:scaleX(1.0625);">Ч</span>
<span class="t" style="left:503.60px;top:73.00px;font-size:11.6px;color:#2b2b2b;transform:scaleX(1.0591);">Общий</span>
<span class="t" style="left:539.20px;top:94.20px;font-size:14px;color:#444;transform:scaleX(1.0667);">%</span>
<span class="t" style="left:559.60px;top:97.30px;font-size:9px;color:#444;transform:scaleX(0.9726);">000</span>
<span class="t" style="left:616.00px;top:73.00px;font-size:11.6px;color:#2b2b2b;transform:scaleX(1.0303);">Условное форматирование</span>
<span class="t" style="left:616.00px;top:96.00px;font-size:11.6px;color:#2b2b2b;transform:scaleX(1.0328);">Форматировать как таблицу</span>
<span class="t" style="left:616.00px;top:119.00px;font-size:11.6px;color:#2b2b2b;transform:scaleX(0.9995);">Стили ячеек</span>
<span class="t" style="left:825.20px;top:73.00px;font-size:11.6px;color:#2b2b2b;transform:scaleX(0.9653);">Вставить</span>
<span class="t" style="left:825.20px;top:96.00px;font-size:11.6px;color:#2b2b2b;transform:scaleX(0.9814);">Удалить</span>
<span class="t" style="left:825.20px;top:119.00px;font-size:11.6px;color:#2b2b2b;transform:scaleX(1.0102);">Формат</span>
<span class="t" style="left:13.60px;top:173.20px;font-size:13px;color:#333;transform:scaleX(0.9827);">A1</span>
<span class="t" style="left:262.70px;top:173.40px;font-size:13px;color:#333;transform:scaleX(1.2014);">№ п/п</span>
<span class="t" style="left:50.08px;top:207.00px;font-size:14px;color:#1e5c3a;transform:scaleX(0.9900);">A</span>
<span class="t" style="left:137.36px;top:207.00px;font-size:14px;color:#161616;transform:scaleX(0.9300);">B</span>
<span class="t" style="left:256.45px;top:207.00px;font-size:14px;color:#161616;transform:scaleX(0.8400);">C</span>
<span class="t" style="left:342.80px;top:207.00px;font-size:14px;color:#161616;transform:scaleX(0.9700);">D</span>
<span class="t" style="left:434.30px;top:207.00px;font-size:14px;color:#161616;transform:scaleX(0.8350);">E</span>
<span class="t" style="left:581.02px;top:207.00px;font-size:14px;color:#161616;transform:scaleX(0.8600);">F</span>
<span class="t" style="left:702.14px;top:207.00px;font-size:14px;color:#161616;transform:scaleX(0.9300);">G</span>
<span class="t" style="left:774.22px;top:207.00px;font-size:14px;color:#161616;transform:scaleX(0.9850);">H</span>
<span class="t" style="left:849.20px;top:207.00px;font-size:14px;color:#161616;transform:scaleX(1.0300);">I</span>
<span class="t" style="left:920.65px;top:207.00px;font-size:14px;color:#161616;transform:scaleX(0.7300);">J</span>
<span class="t" style="left:991.04px;top:207.00px;font-size:14px;color:#161616;transform:scaleX(0.8900);">K</span>
<span class="t" style="left:11.29px;top:228.00px;font-size:14px;color:#1e5c3a;transform:scaleX(1.0300);">1</span>
<span class="t" style="left:11.29px;top:249.00px;font-size:14px;color:#161616;transform:scaleX(1.0300);">2</span>
<span class="t" style="left:11.29px;top:270.00px;font-size:14px;color:#161616;transform:scaleX(1.0300);">3</span>
<span class="t" style="left:11.29px;top:291.00px;font-size:14px;color:#161616;transform:scaleX(1.0300);">4</span>
<span class="t" style="left:11.29px;top:312.00px;font-size:14px;color:#161616;transform:scaleX(1.0300);">5</span>
<span class="t" style="left:11.29px;top:333.00px;font-size:14px;color:#161616;transform:scaleX(1.0300);">6</span>
<span class="t" style="left:11.29px;top:354.00px;font-size:14px;color:#161616;transform:scaleX(1.0300);">7</span>
<span class="t" style="left:11.29px;top:375.00px;font-size:14px;color:#161616;transform:scaleX(1.0300);">8</span>
<span class="t" style="left:11.29px;top:396.00px;font-size:14px;color:#161616;transform:scaleX(1.0300);">9</span>
<span class="t" style="left:7.28px;top:417.00px;font-size:14px;color:#161616;transform:scaleX(1.0300);">10</span>
<span class="t" style="left:7.82px;top:438.00px;font-size:14px;color:#161616;transform:scaleX(1.0300);">11</span>
<span class="t" style="left:7.28px;top:459.00px;font-size:14px;color:#161616;transform:scaleX(1.0300);">12</span>
<span class="t" style="left:7.28px;top:480.00px;font-size:14px;color:#161616;transform:scaleX(1.0300);">13</span>
<span class="t" style="left:7.28px;top:501.00px;font-size:14px;color:#161616;transform:scaleX(1.0300);">14</span>
<span class="t" style="left:7.28px;top:522.00px;font-size:14px;color:#161616;transform:scaleX(1.0300);">15</span>
<span class="t" style="left:7.28px;top:543.00px;font-size:14px;color:#161616;transform:scaleX(1.0300);">16</span>
<span class="t" style="left:7.28px;top:564.00px;font-size:14px;color:#161616;transform:scaleX(1.0300);">17</span>
<span class="t" style="left:7.28px;top:585.00px;font-size:14px;color:#161616;transform:scaleX(1.0300);">18</span>
<span class="t" style="left:7.28px;top:606.00px;font-size:14px;color:#161616;transform:scaleX(1.0300);">19</span>
<span class="t" style="left:7.28px;top:627.00px;font-size:14px;color:#161616;transform:scaleX(1.0300);">20</span>
<span class="t" style="left:7.28px;top:648.00px;font-size:14px;color:#161616;transform:scaleX(1.0300);">21</span>
<span class="t" style="left:125.85px;top:228.00px;font-size:14px;color:#000000;transform:scaleX(0.9603);font-weight:700;">ФИО</span>
<span class="t" style="left:209.41px;top:228.00px;font-size:14px;color:#000000;transform:scaleX(1.0447);font-weight:700;">Год рождения</span>
<span class="t" style="left:334.46px;top:228.00px;font-size:14px;color:#000000;transform:scaleX(0.9899);font-weight:700;">Пол</span>
<span class="t" style="left:382.43px;top:228.00px;font-size:14px;color:#000000;transform:scaleX(1.0525);font-weight:700;">Сумма з/п, руб.</span>
<span class="t" style="left:556.66px;top:228.00px;font-size:14px;color:#000000;transform:scaleX(1.0154);font-weight:700;">Премия</span>
<span class="t" style="left:31.00px;top:228.00px;font-size:14px;color:#000000;transform:scaleX(1.1194);font-weight:700;">№ п/п</span>
<span class="t" style="left:67.90px;top:249.00px;font-size:14px;color:#000000;transform:scaleX(1.0400);">1</span>
<span class="t" style="left:80.80px;top:249.00px;font-size:14px;color:#000000;transform:scaleX(1.0566);">Иванов И.И.</span>
<span class="t" style="left:244.50px;top:249.00px;font-size:14px;color:#000000;transform:scaleX(1.0145);">1968</span>
<span class="t" style="left:330.66px;top:249.00px;font-size:14px;color:#000000;transform:scaleX(1.1022);">муж.</span>
<span class="t" style="left:451.27px;top:249.00px;font-size:14px;color:#000000;transform:scaleX(1.0400);">34 758</span>
<span class="t" style="left:67.90px;top:270.00px;font-size:14px;color:#000000;transform:scaleX(1.0400);">2</span>
<span class="t" style="left:80.80px;top:270.00px;font-size:14px;color:#000000;transform:scaleX(1.0249);">Петрова А.И.</span>
<span class="t" style="left:244.50px;top:270.00px;font-size:14px;color:#000000;transform:scaleX(1.0145);">1991</span>
<span class="t" style="left:331.46px;top:270.00px;font-size:14px;color:#000000;transform:scaleX(1.1010);">жен.</span>
<span class="t" style="left:451.27px;top:270.00px;font-size:14px;color:#000000;transform:scaleX(1.0400);">24 587</span>
<span class="t" style="left:67.90px;top:291.00px;font-size:14px;color:#000000;transform:scaleX(1.0400);">3</span>
<span class="t" style="left:80.80px;top:291.00px;font-size:14px;color:#000000;transform:scaleX(1.0379);">Сидоров К.В.</span>
<span class="t" style="left:244.50px;top:291.00px;font-size:14px;color:#000000;transform:scaleX(1.0145);">1983</span>
<span class="t" style="left:330.66px;top:291.00px;font-size:14px;color:#000000;transform:scaleX(1.1022);">муж.</span>
<span class="t" style="left:451.27px;top:291.00px;font-size:14px;color:#000000;transform:scaleX(1.0400);">15 748</span>
<span class="t" style="left:67.90px;top:312.00px;font-size:14px;color:#000000;transform:scaleX(1.0400);">4</span>
<span class="t" style="left:80.80px;top:312.00px;font-size:14px;color:#000000;transform:scaleX(1.0880);">Прицепин М.О.</span>
<span class="t" style="left:244.50px;top:312.00px;font-size:14px;color:#000000;transform:scaleX(1.0145);">1994</span>
<span class="t" style="left:330.66px;top:312.00px;font-size:14px;color:#000000;transform:scaleX(1.1022);">муж.</span>
<span class="t" style="left:451.27px;top:312.00px;font-size:14px;color:#000000;transform:scaleX(1.0400);">52 648</span>
<span class="t" style="left:67.90px;top:333.00px;font-size:14px;color:#000000;transform:scaleX(1.0400);">5</span>
<span class="t" style="left:80.80px;top:333.00px;font-size:14px;color:#000000;transform:scaleX(1.0833);">Кузькина О.В.</span>
<span class="t" style="left:244.50px;top:333.00px;font-size:14px;color:#000000;transform:scaleX(1.0145);">1983</span>
<span class="t" style="left:331.46px;top:333.00px;font-size:14px;color:#000000;transform:scaleX(1.1010);">жен.</span>
<span class="t" style="left:451.27px;top:333.00px;font-size:14px;color:#000000;transform:scaleX(1.0400);">25 748</span>
<span class="t" style="left:67.90px;top:354.00px;font-size:14px;color:#000000;transform:scaleX(1.0400);">6</span>
<span class="t" style="left:80.80px;top:354.00px;font-size:14px;color:#000000;transform:scaleX(1.0449);">Матвеев И.В.</span>
<span class="t" style="left:244.50px;top:354.00px;font-size:14px;color:#000000;transform:scaleX(1.0145);">1994</span>
<span class="t" style="left:330.66px;top:354.00px;font-size:14px;color:#000000;transform:scaleX(1.1022);">муж.</span>
<span class="t" style="left:451.27px;top:354.00px;font-size:14px;color:#000000;transform:scaleX(1.0400);">36 245</span>
<span class="t" style="left:113.60px;top:672.00px;font-size:13px;color:#0f7842;transform:scaleX(0.9740);font-weight:700;">microexcel.ru</span>
<span class="t" style="left:222.20px;top:672.80px;font-size:12px;color:#333;transform:scaleX(0.9766);">Лист2</span>
<span class="t" style="left:9.40px;top:697.00px;font-size:11.6px;color:#2b2b2b;transform:scaleX(1.0127);">Готово</span>
<span class="t" style="left:1029.20px;top:697.00px;font-size:11.6px;color:#2b2b2b;transform:scaleX(0.8721);">100 %</span>
<span class="t" style="left:273.40px;top:80.60px;font-size:13px;color:#5a5a5a;transform:scaleX(1.0222);">A</span>
<span class="t" style="left:296.20px;top:83.60px;font-size:10.4px;color:#5a5a5a;transform:scaleX(1.0857);">A</span>
<span class="t" style="left:284.00px;top:109.60px;font-size:13.4px;color:#5a5a5a;transform:scaleX(0.9556);">A</span>
</div>
</body></html>
